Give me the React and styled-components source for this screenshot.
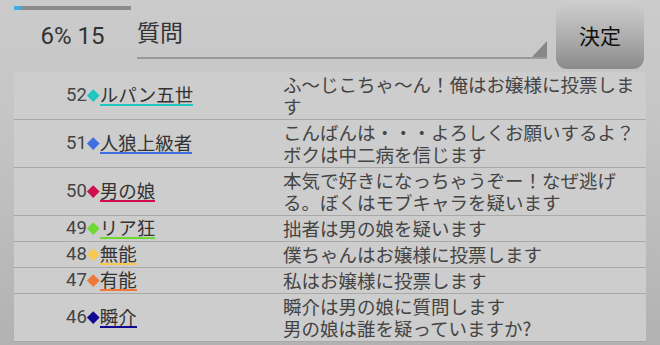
import React from "react";
import styled, { createGlobalStyle } from "styled-components";

const Global = createGlobalStyle`
  html, body { margin: 0; padding: 0; height: 100%; overflow: hidden; }
  body {
    background: linear-gradient(to bottom, #cbcbcb 0%, #c6c6c6 30%, #b2b2b2 100%);
    font-family: Roboto, "Noto Sans CJK JP", sans-serif;
  }
  #root { min-height: 100vh; }
`;

const Page = styled.div`
  padding: 0 14px;
  display: flex;
  flex-direction: column;
`;

const Header = styled.header`
  display: flex;
  height: 72px;
  align-items: flex-start;
`;

const Status = styled.div`
  width: 117px;
  padding-top: 6px;
  display: flex;
  flex-direction: column;
  align-items: stretch;
`;

const Progress = styled.div`
  height: 4px;
  background: #8c8c8c;
  position: relative;
`;

const ProgressFill = styled.div`
  height: 100%;
  background: #3aafe0;
`;

const StatusText = styled.div`
  margin-top: 12px;
  text-align: center;
  font-size: 24px;
  line-height: 28px;
  color: #333;
`;

const Field = styled.div`
  flex: 1;
  margin-left: 6px;
  height: 59px;
  border-bottom: 2px solid #9a9a9a;
  position: relative;
  box-sizing: border-box;
  padding-top: 17px;
  font-family: "Noto Sans CJK JP", sans-serif;
  font-size: 23px;
  line-height: 28px;
  color: #333;
`;

const Corner = styled.div`
  position: absolute;
  right: 0;
  bottom: 0;
  width: 0;
  height: 0;
  border-style: solid;
  border-width: 0 0 16px 15px;
  border-color: transparent transparent #888 transparent;
`;

const Button = styled.button`
  margin-left: 9px;
  margin-right: 2px;
  width: 88px;
  height: 69px;
  border: none;
  border-radius: 11px;
  background: linear-gradient(to bottom, #cfcfcf 0%, #adadad 55%, #8a8a8a 100%);
  font-family: "Noto Sans CJK JP", sans-serif;
  font-size: 21px;
  color: #111;
  padding: 0;
`;

const List = styled.div`
  background: #cdcdcd;
`;

const Row = styled.div`
  display: grid;
  grid-template-columns: 269px 1fr;
  border-bottom: 1px solid #a9a9a9;
  padding: 1px 0 2px;
`;

const Who = styled.div`
  display: flex;
  align-items: center;
  padding-left: 52px;
  font-size: 18.5px;
  color: #444;
`;

const Num = styled.span`
  font-family: Roboto, sans-serif;
`;

const Diamond = styled.span`
  width: 13px;
  display: flex;
  justify-content: center;
  align-items: center;
  &::before {
    content: "";
    width: 8.5px;
    height: 8.5px;
    background: ${(p) => p.$c};
    transform: rotate(45deg);
  }
`;

const Name = styled.span`
  font-family: "Noto Sans CJK JP", sans-serif;
  line-height: 20px;
  color: #333;
  border-bottom: 2px solid ${(p) => p.$c};
`;

const Message = styled.div`
  font-family: "Noto Sans CJK JP", sans-serif;
  font-size: 18.5px;
  line-height: 22px;
  color: #444;
  white-space: pre-wrap;
  padding-right: 8px;
`;

const rows = [
  { n: 52, c: "#1ec8c0", name: "ルパン五世", msg: "ふ〜じこちゃ〜ん！俺はお嬢様に投票します" },
  { n: 51, c: "#3f6fe0", name: "人狼上級者", msg: "こんばんは・・・よろしくお願いするよ？\nボクは中二病を信じます" },
  { n: 50, c: "#d0104c", name: "男の娘", msg: "本気で好きになっちゃうぞー！なぜ逃げる。ぼくはモブキャラを疑います" },
  { n: 49, c: "#6fd833", name: "リア狂", msg: "拙者は男の娘を疑います" },
  { n: 48, c: "#f8c850", name: "無能", msg: "僕ちゃんはお嬢様に投票します" },
  { n: 47, c: "#f07838", name: "有能", msg: "私はお嬢様に投票します" },
  { n: 46, c: "#10088f", name: "瞬介", msg: "瞬介は男の娘に質問します\n男の娘は誰を疑っていますか?" },
];

export default function App() {
  const pct = 6;
  return (
    <>
      <Global />
      <Page>
        <Header>
          <Status>
            <Progress>
              <ProgressFill style={{ width: `${pct}%` }} />
            </Progress>
            <StatusText>6% 15</StatusText>
          </Status>
          <Field>
            質問
            <Corner />
          </Field>
          <Button>決定</Button>
        </Header>
        <List>
          {rows.map((r) => (
            <Row key={r.n}>
              <Who>
                <Num>{r.n}</Num>
                <Diamond $c={r.c} />
                <Name $c={r.c}>{r.name}</Name>
              </Who>
              <Message>{r.msg}</Message>
            </Row>
          ))}
        </List>
      </Page>
    </>
  );
}
